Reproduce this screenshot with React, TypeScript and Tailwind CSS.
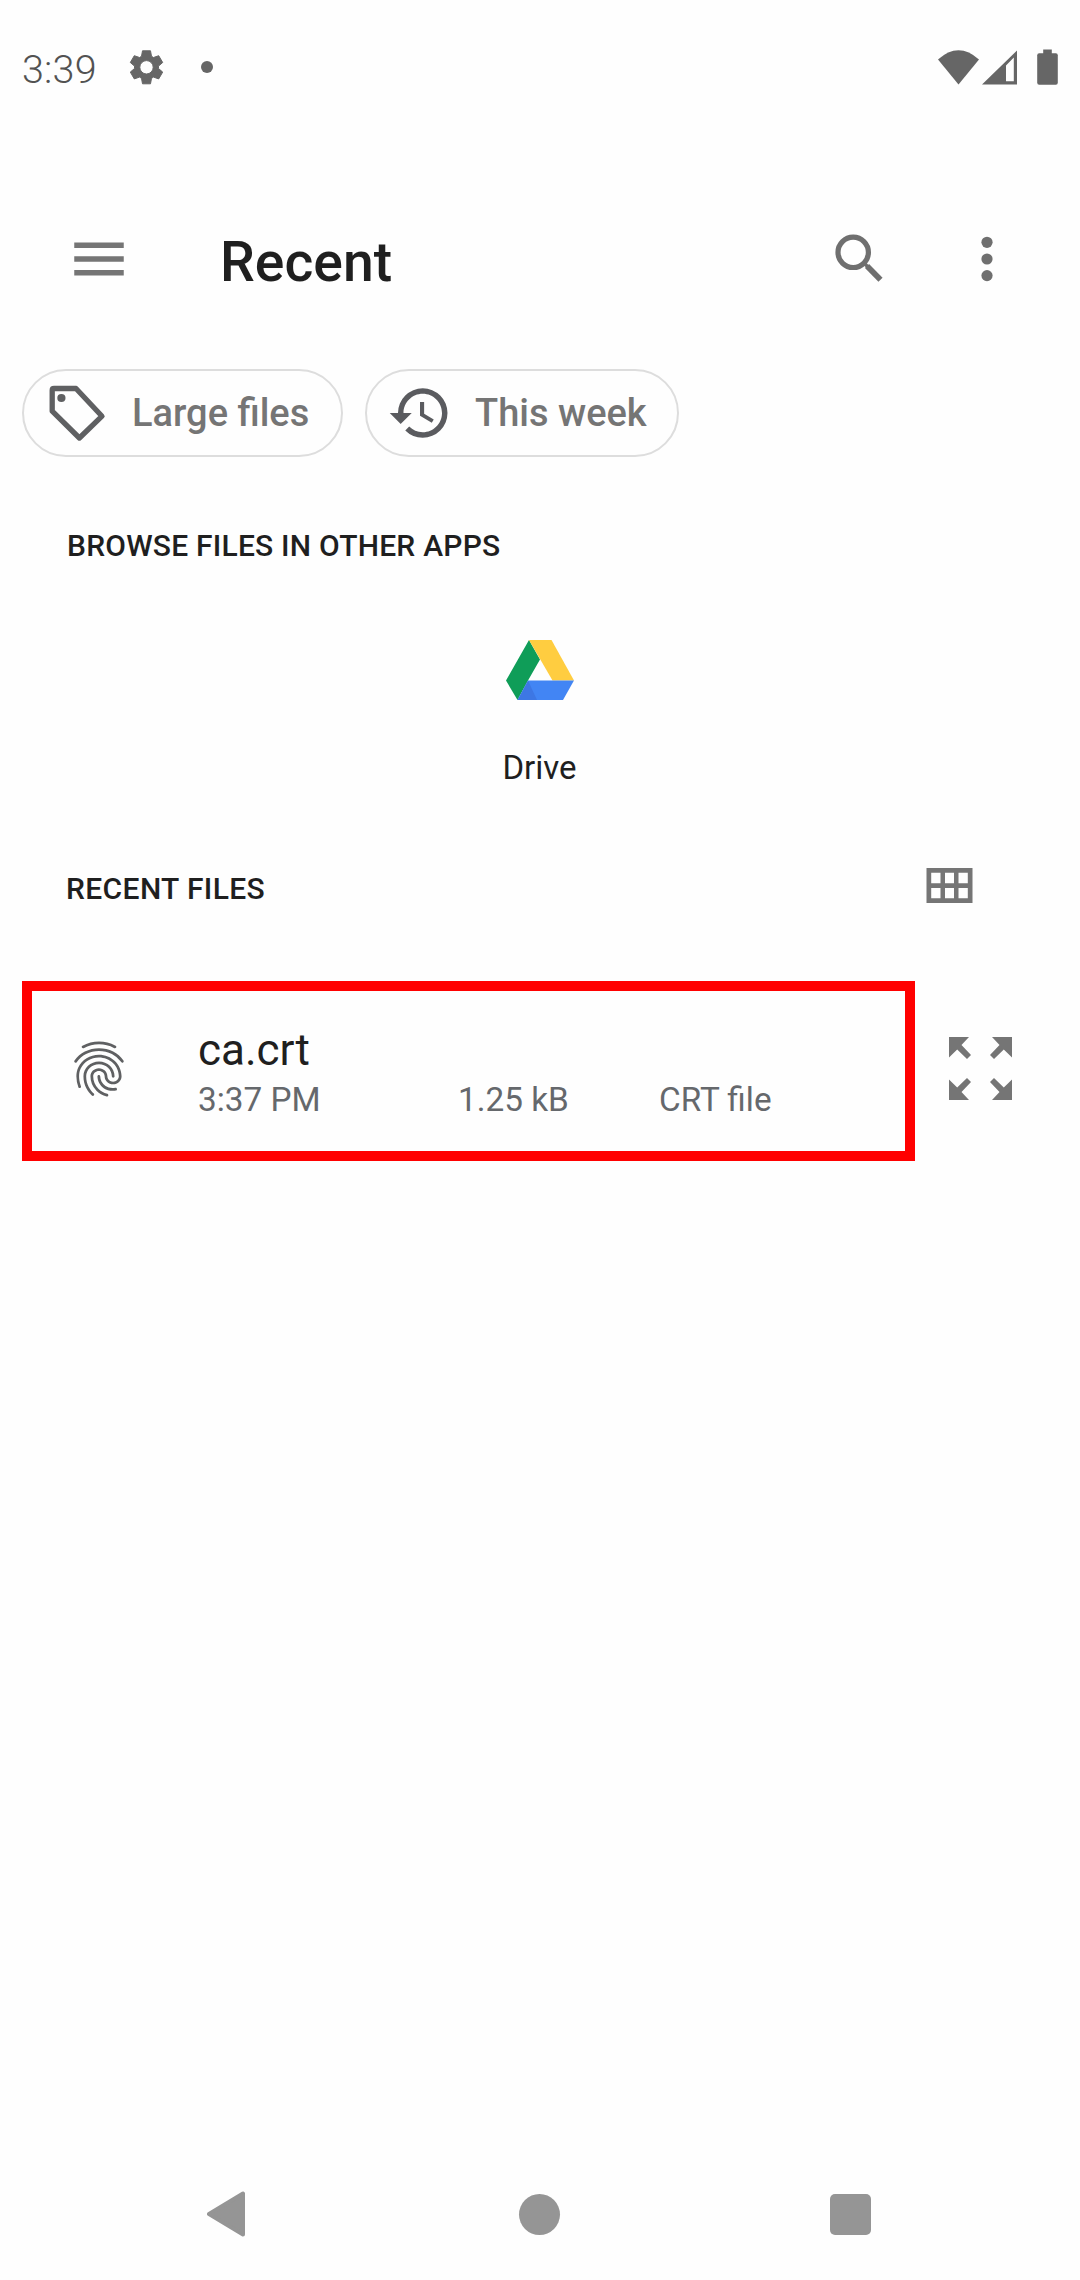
import type { ReactNode } from "react";
import { MdFingerprint, MdHistory, MdMenu } from "react-icons/md";

const GearIcon = () => (
  <svg width="36" height="36" viewBox="-18.5 -18.3 36 36" className="block shrink-0">
    <path
      fillRule="evenodd"
      fill="#666666"
      stroke="#666666"
      strokeWidth="1"
      strokeLinejoin="round"
      d="M-5-11L-4-16.5L4-16.5L5-11L7-9.8L12.2-11.6L16.2-4.8L12-1.2L12 1.2L16.2 4.8L12.2 11.6L7 9.8L5 11L4 16.5L-4 16.5L-5 11L-7 9.8L-12.2 11.6L-16.2 4.8L-12 1.2L-12-1.2L-16.2-4.8L-12.2-11.6L-7-9.8ZM0-6.7A6.7 6.7 0 1 0 0 6.7A6.7 6.7 0 1 0 0-6.7Z"
    />
  </svg>
);

const WifiIcon = () => (
  <svg width="41" height="36" viewBox="0 0 41 36" className="block">
    <path fill="#666666" d="M0 10.5Q20.5-8 41 10.5L20.5 35.5Z" />
  </svg>
);

const SignalIcon = () => (
  <svg width="35" height="36" viewBox="0 0 35 36" className="block">
    <path
      fill="#666666"
      fillRule="evenodd"
      d="M0 35.5H35V1.5ZM24 16.5L31.8 8.5V32.3H24Z"
    />
  </svg>
);

const BatteryIcon = () => (
  <svg width="21" height="36" viewBox="0 0 21 36" className="block">
    <rect x="6.2" y="0.5" width="8.6" height="6" fill="#666666" />
    <rect x="0.2" y="4.3" width="20.6" height="31.5" rx="2" fill="#666666" />
  </svg>
);

const SearchIcon = () => (
  <svg width="50" height="50" viewBox="0 0 50 50" className="block" stroke="#6f6f6f" fill="none">
    <circle cx="18.2" cy="18.3" r="15.2" strokeWidth="5.2" />
    <path d="M29 29L33 33" strokeWidth="3.5" />
    <path d="M32 32L45.5 45.8" strokeWidth="5.8" />
  </svg>
);

const MoreIcon = () => (
  <svg width="12" height="46" viewBox="0 0 12 46" className="block" fill="#6f6f6f">
    <circle cx="6" cy="6.3" r="5.6" />
    <circle cx="6" cy="23" r="5.6" />
    <circle cx="6" cy="39.6" r="5.6" />
  </svg>
);

const TagIcon = () => (
  <svg width="57" height="57" viewBox="0 0 57 57" className="block">
    <path
      d="M5 3.5H27L53 31.2L30.4 53L3.2 26.2V5.3Q3.2 3.5 5 3.5Z"
      fill="none"
      stroke="#5f6062"
      strokeWidth="5.3"
      strokeLinejoin="round"
    />
    <circle cx="12.4" cy="13" r="4.1" fill="#5f6062" />
  </svg>
);

const DriveIcon = () => (
  <svg width="68" height="60" viewBox="0 0 68 60" className="block">
    <path fill="#0f9d58" d="M23 0L34 19.5L22 40.5L11.5 60L0 40.5Z" />
    <path fill="#ffcd40" d="M23 0H45.5L68 40.5H46.5Z" />
    <path fill="#4285f4" d="M22 40.5H68L57 60H11.5Z" />
    <path fill="#3c71dd" fillOpacity="0.7" d="M22 40.5L31 60H11.5Z" />
  </svg>
);

const GridIcon = () => (
  <svg width="47" height="35" viewBox="0 0 47 35" className="block">
    <path
      fill="#757575"
      fillRule="evenodd"
      d="M0.5 0H46.5V35H0.5ZM5.2 4.7V15.3H14.5V4.7ZM19 4.7V15.3H28V4.7ZM32.5 4.7V15.3H41.8V4.7ZM5.2 20V30.3H14.5V20ZM19 20V30.3H28V20ZM32.5 20V30.3H41.8V20Z"
    />
  </svg>
);

const arrow = "M0 0H20L12.5 9L22.5 20L18 25L8.2 14L0 23Z";

const ExpandIcon = () => (
  <svg width="63" height="63" viewBox="0 0 63 63" className="block" fill="#757575">
    <path d="M0 0H20L12.5 8L22 18L18 22L8.2 12.5L0 20.5Z" />
    <path d="M63 0H43L50.5 8L41 18L45 22L54.8 12.5L63 20.5Z" />
    <path d="M0 63H20L12.5 55L22 45L18 41L8.2 50.5L0 42.5Z" />
    <path d="M63 63H43L50.5 55L41 45L45 41L54.8 50.5L63 42.5Z" />
  </svg>
);

function Chip({ icon, label, className }: { icon: ReactNode; label: string; className: string }) {
  return (
    <button
      className={`flex h-[88px] items-center rounded-full border-2 border-[#dddddd] text-[38px] font-medium leading-[48px] text-[#757575] ${className}`}
    >
      {icon}
      <span className="whitespace-nowrap">{label}</span>
    </button>
  );
}

export default function App() {
  return (
    <div className="flex h-[2280px] w-[1080px] flex-col overflow-hidden bg-[#fefefe] font-['Roboto',sans-serif] text-[#1f1f1f]">
      <div className="flex h-[134px] items-center pl-[22px] pr-[22px]">
        <span className="w-[106px] pt-[5px] text-[39.5px] font-[350] leading-[44px] tracking-[0.2px] text-[#525252]">
          3:39
        </span>
        <GearIcon />
        <span className="ml-[37px] size-[12px] rounded-full bg-[#666666]" />
        <div className="ml-auto flex items-center">
          <WifiIcon />
          <span className="w-[3px]" />
          <SignalIcon />
          <span className="w-[20px]" />
          <BatteryIcon />
        </div>
      </div>

      <header className="mt-[65px] flex h-[120px] items-center pl-[66px] pr-[87px]">
        <MdMenu size={66} color="#757575" />
        <h1 className="ml-[88px] pt-[7px] text-[55.3px] font-medium leading-[64px]">Recent</h1>
        <div className="ml-auto flex items-center">
          <SearchIcon />
          <span className="w-[96px]" />
          <MoreIcon />
        </div>
      </header>

      <div className="mt-[50px] flex gap-[22px] pl-[22px]">
        <Chip
          className="w-[321px] pl-[25px]"
          icon={<span className="mr-[26px]"><TagIcon /></span>}
          label="Large files"
        />
        <Chip
          className="w-[314px] pl-[20px]"
          icon={<MdHistory size={66} color="#5a5b5f" className="mr-[22px]" />}
          label="This week"
        />
      </div>

      <section>
        <h2 className="mt-[69px] pl-[67px] text-[30px] font-medium leading-[40px] tracking-[0.22px]">
          BROWSE FILES IN OTHER APPS
        </h2>
        <div className="mt-[74px] flex flex-col items-center">
          <DriveIcon />
          <span className="mt-[48px] pr-px text-[33px] leading-[40px]">Drive</span>
        </div>
      </section>

      <section>
        <div className="mt-[80px] flex items-start justify-between pl-[66px] pr-[107px]">
          <h2 className="pt-px text-[30px] font-medium leading-[40px] tracking-[0.38px]">
            RECENT FILES
          </h2>
          <GridIcon />
        </div>
        <div className="mt-[72px] flex items-start">
          <div className="ml-[22px] flex h-[180px] w-[893px] border-[10px] border-[#ff0000]">
            <div className="flex w-[166px] items-center pb-[4px] pl-[34px]">
              <MdFingerprint size={66} color="#5f6062" />
            </div>
            <div className="pt-[33px]">
              <p className="text-[44px] leading-[52px]">ca.crt</p>
              <div className="mt-[4px] flex text-[33.3px] leading-[40px] text-[#65686c]">
                <span className="w-[260px]">3:37 PM</span>
                <span className="w-[201px]">1.25 kB</span>
                <span>CRT file</span>
              </div>
            </div>
          </div>
          <div className="ml-[34px] mt-[56px]">
            <ExpandIcon />
          </div>
        </div>
      </section>

      <nav className="mt-auto flex h-[132px] items-center pl-[207px]">
        <svg width="39" height="46" viewBox="0 0 39 46" className="block">
          <path
            d="M2 23L36 2.5V43.5Z"
            fill="#959595"
            stroke="#959595"
            strokeWidth="4"
            strokeLinejoin="round"
          />
        </svg>
        <span className="ml-[273px] size-[41px] rounded-full bg-[#959595]" />
        <span className="ml-[270px] size-[41px] rounded-[5px] bg-[#959595]" />
      </nav>
    </div>
  );
}
